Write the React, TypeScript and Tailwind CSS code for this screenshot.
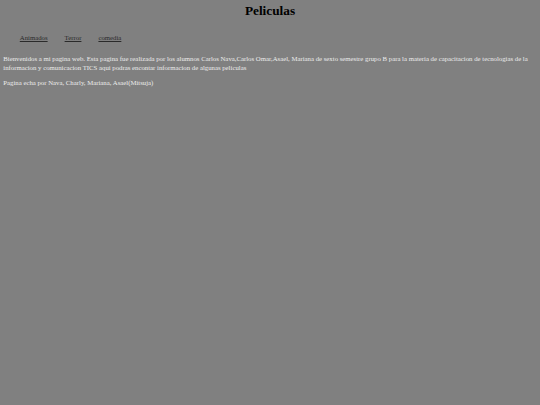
export default function App() {
  const links = ['Animados', 'Terror', 'comedia']
  return (
    <div
      className="min-h-screen bg-[#808080] px-[3.3px] text-[6.78px] leading-[8.4px] text-[#ececec]"
      style={{ fontFamily: '"Liberation Serif", "Times New Roman", serif' }}
    >
      <h1 className="pt-[3px] text-center text-[13.3px] font-bold leading-[15px] text-black">Peliculas</h1>
      <nav className="mt-[16px] flex gap-[17px] pl-[16.5px]">
        {links.map((l) => (
          <a key={l} href="#" className="text-[#2a2a2a] underline">
            {l}
          </a>
        ))}
      </nav>
      <p className="mt-[13px]">
        Bienvenidos a mi pagina web. Esta pagina fue realizada por los alumnos Carlos Nava,Carlos Omar,Asael, Mariana de sexto
        semestre grupo B para la materia de capacitacion de tecnologias de la informacion y comunicacion TICS aqui podras encontar
        informacion de algunas peliculas
      </p>
      <p className="mt-[6.6px]">Pagina echa por Nava, Charly, Mariana, Asael(Mitsuja)</p>
    </div>
  )
}
